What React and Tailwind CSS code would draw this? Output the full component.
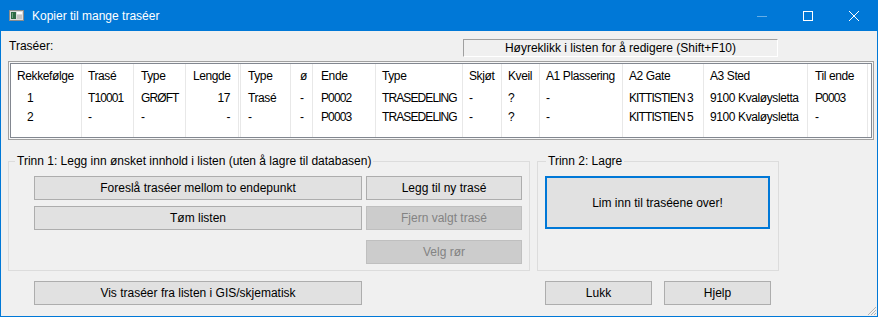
import React from 'react';

const columns = [
  { label: 'Rekkefølge', w: 'w-[71px]', head: 'pl-[6px]', cell: 'pl-[16px]' },
  { label: 'Trasé', w: 'w-[52px]', head: 'pl-[6px]', cell: 'pl-[6px]' },
  { label: 'Type', w: 'w-[52px]', head: 'pl-[7px]', cell: 'pl-[7px]' },
  { label: 'Lengde', w: 'w-[53px]', head: 'pl-[7px]', cell: 'justify-end pr-[8px]' },
  { label: '', w: 'w-[2px]', head: '', cell: '' },
  { label: 'Type', w: 'w-[50px]', head: 'pl-[7px]', cell: 'pl-[7px]' },
  { label: 'ø', w: 'w-[22px]', head: 'pl-[9px]', cell: 'pl-[9px]' },
  { label: 'Ende', w: 'w-[63px]', head: 'pl-[8px]', cell: 'pl-[8px]' },
  { label: 'Type', w: 'w-[87px]', head: 'pl-[6px]', cell: 'pl-[6px]' },
  { label: 'Skjøt', w: 'w-[39px]', head: 'pl-[6px]', cell: 'pl-[6px]' },
  { label: 'Kveil', w: 'w-[38px]', head: 'pl-[6px]', cell: 'pl-[6px]' },
  { label: 'A1 Plassering', w: 'w-[83px]', head: 'pl-[6px]', cell: 'pl-[6px]' },
  { label: 'A2 Gate', w: 'w-[81px]', head: 'pl-[6px]', cell: 'pl-[6px]' },
  { label: 'A3 Sted', w: 'w-[104px]', head: 'pl-[6px]', cell: 'pl-[6px]' },
  { label: 'Til ende', w: 'w-[60px]', head: 'pl-[7px]', cell: 'pl-[7px]' },
];

const rows = [
  ['1', 'T10001', 'GRØFT', '17', '', 'Trasé', '-', 'P0002', 'TRASEDELING', '-', '?', '-', 'KITTISTIEN 3', '9100 Kvaløysletta', 'P0003'],
  ['2', '-', '-', '-', '', '-', '-', 'P0003', 'TRASEDELING', '-', '?', '-', 'KITTISTIEN 5', '9100 Kvaløysletta', '-'],
];

// Liberation caps/digits run wider than the original UI font, so squeeze them
const isCaps = (s) => /^[A-ZÆØÅ0-9 ]{3,}$/.test(s);

function Btn({ children, className = '', disabled = false }) {
  return (
    <button
      className={
        'h-[24px] flex items-center justify-center border leading-none ' +
        (disabled
          ? 'bg-[#cccccc] border-[#bfbfbf] text-[#838383] '
          : 'bg-[#e1e1e1] border-[#adadad] text-black ') +
        className
      }
    >
      {children}
    </button>
  );
}

function AppIcon() {
  return (
    <svg width="15" height="11" viewBox="0 0 15 11">
      <rect x="0.5" y="0.5" width="14" height="10" fill="#dcdcdc" stroke="#8c8c8c" />
      <rect x="2" y="2" width="5" height="7" fill="#2e6a45" />
      <rect x="3" y="3" width="1" height="5" fill="#6fa27e" />
      <rect x="8" y="2" width="5" height="2" fill="#ffffff" />
      <rect x="8" y="5" width="5" height="4" fill="#c4c4c4" />
    </svg>
  );
}

export default function App() {
  return (
    <div className="w-[878px] h-[317px] flex flex-col border-x border-b border-[#0078d7] bg-[#f0f0f0] font-['Liberation_Sans',Arial,sans-serif] text-[12px] text-black overflow-hidden">
      {/* title bar */}
      <div className="h-[31px] shrink-0 bg-[#0078d7] flex items-center text-white">
        <div className="pl-[8px] pr-[8px] flex items-center">
          <AppIcon />
        </div>
        <span className="leading-none">Kopier til mange traséer</span>
        <div className="ml-auto flex h-full">
          <div className="w-[46px] h-full flex items-center justify-center">
            <svg width="10" height="10" viewBox="0 0 10 10">
              <line x1="0" y1="5.5" x2="10" y2="5.5" stroke="rgba(255,255,255,0.4)" strokeWidth="1" />
            </svg>
          </div>
          <div className="w-[46px] h-full flex items-center justify-center">
            <svg width="10" height="10" viewBox="0 0 10 10">
              <rect x="0.5" y="0.5" width="9" height="9" fill="none" stroke="#fff" strokeWidth="1" />
            </svg>
          </div>
          <div className="w-[46px] h-full flex items-center justify-center">
            <svg width="10" height="10" viewBox="0 0 10 10">
              <path d="M0 0 L10 10 M10 0 L0 10" stroke="#fff" strokeWidth="1" />
            </svg>
          </div>
        </div>
      </div>

      {/* content */}
      <div className="relative flex-1 px-[7px] pt-[8px]">
        <div className="grid grid-cols-[455px_315px] items-start">
          <span className="leading-[14px] pl-[1px]">Traséer:</span>
          <div className="h-[18px] flex items-center justify-center border border-t-[#a0a0a0] border-l-[#a0a0a0] border-b-white border-r-white">
            Høyreklikk i listen for å redigere (Shift+F10)
          </div>
        </div>

        {/* list view */}
        <div className="mt-[4px] w-[866px] h-[79px] border border-[#a0a0a0] p-[1px] bg-[#f7f7f7]">
          <div className="h-full border border-[#828790] bg-white flex tracking-[-0.4px]">
            {columns.map((c, i) => (
              <div key={i} className={c.w + ' shrink-0 border-r border-[#e8e8e8] flex flex-col'}>
                <div className={'h-[24px] flex items-center whitespace-nowrap ' + c.head}>{c.label}</div>
                {rows.map((r, j) => (
                  <div
                    key={j}
                    className={
                      'h-[19px] flex items-center whitespace-nowrap ' +
                      (isCaps(r[i]) ? 'tracking-[-0.9px] ' : '') +
                      c.cell
                    }
                  >
                    {r[i]}
                  </div>
                ))}
              </div>
            ))}
          </div>
        </div>

        {/* group boxes */}
        <div className="mt-[13px] flex gap-[7px]">
          <fieldset className="w-[522px] h-[118px] border border-[#dcdcdc] pl-[25px] pt-[7px]">
            <legend className="ml-[-19px] px-[2px] leading-[16px]">
              Trinn 1: Legg inn ønsket innhold i listen (uten å lagre til databasen)
            </legend>
            <div className="grid grid-cols-[328px_156px] gap-x-[4px]">
              <Btn>Foreslå traséer mellom to endepunkt</Btn>
              <Btn>Legg til ny trasé</Btn>
              <Btn className="mt-[6px]">Tøm listen</Btn>
              <Btn className="mt-[6px]" disabled>Fjern valgt trasé</Btn>
              <div />
              <Btn className="mt-[10px]" disabled>Velg rør</Btn>
            </div>
          </fieldset>
          <fieldset className="w-[242px] h-[118px] border border-[#dcdcdc] px-[7px] pt-[7px]">
            <legend className="ml-[1px] px-[2px] leading-[16px]">Trinn 2: Lagre</legend>
            <button className="w-[225px] h-[53px] flex items-center justify-center bg-[#e1e1e1] border-2 border-[#0078d7]">
              Lim inn til traséene over!
            </button>
          </fieldset>
        </div>

        {/* bottom buttons */}
        <div className="mt-[10px] flex pl-[26px]">
          <Btn className="w-[328px]">Vis traséer fra listen i GIS/skjematisk</Btn>
          <Btn className="w-[107px] ml-[183px]">Lukk</Btn>
          <Btn className="w-[107px] ml-[12px]">Hjelp</Btn>
        </div>

        {/* size grip */}
        <svg className="absolute right-0 bottom-0" width="12" height="12" viewBox="0 0 12 12">
          <path d="M11 3 L3 11 M11 6 L6 11 M11 9 L9 11" stroke="#b4b4b4" strokeWidth="1" />
        </svg>
      </div>
    </div>
  );
}
